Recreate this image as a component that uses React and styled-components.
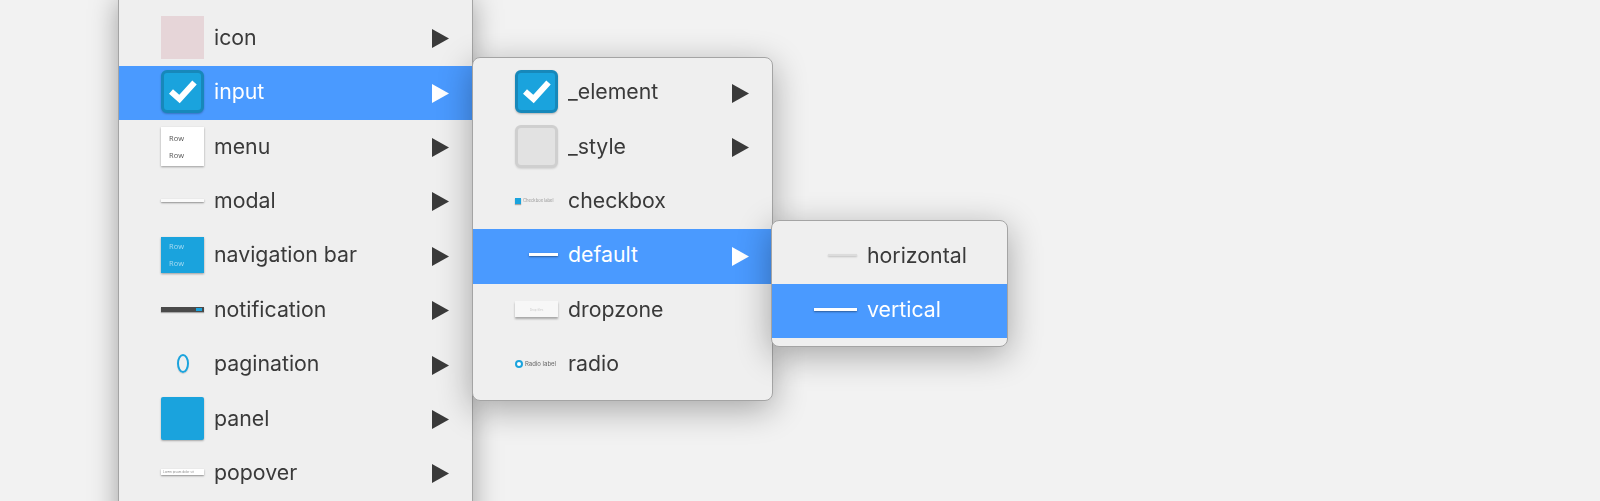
import React from "react";
import styled, { createGlobalStyle } from "styled-components";

const Global = createGlobalStyle`
  html, body { margin: 0; padding: 0; background: #f2f2f2; }
  #root { width: 1600px; height: 501px; overflow: hidden; }
`;

const Page = styled.div`
  width: 1600px;
  height: 501px;
  overflow: hidden;
  padding-left: 118px;
  box-sizing: border-box;
  font-family: Inter, "Liberation Sans", sans-serif;
  filter: blur(0.4px);
`;

const Menu = styled.div`
  box-sizing: border-box;
  width: 355px;
  height: 560px;
  padding-top: 11.6px;
  background: #efefef;
  border-left: 1.5px solid #a4a4a4;
  border-right: 1.5px solid #a4a4a4;
  box-shadow: 0 0 26px rgba(0, 0, 0, 0.34);
  display: flex;
  flex-direction: column;
`;

const Flyout = styled.div`
  position: absolute;
  left: calc(100% - ${(p) => p.$overlap || 0}px);
  top: -8.9px;
  z-index: 2;
  box-sizing: border-box;
  width: ${(p) => p.$width}px;
  padding: 8px 0;
  background: #efefef;
  border: 1px solid #a4a4a4;
  border-radius: 8px;
  box-shadow: 0 8px 34px rgba(0, 0, 0, 0.32);
  display: flex;
  flex-direction: column;
`;

const Row = styled.div`
  position: relative;
  flex: none;
  height: 54.4px;
  box-sizing: border-box;
  padding: 0 23px 0 42px;
  display: flex;
  align-items: center;
  gap: 10px;
  color: ${(p) => (p.$active ? "#fff" : "#3a3a3a")};
  background: ${(p) => (p.$active ? "#4a9aff" : "transparent")};
`;

const Label = styled.span`
  flex: 1;
  font-size: 21.3px;
  font-weight: 400;
  line-height: 28px;
  margin-bottom: 4px;
  white-space: nowrap;
`;

const ArrowIcon = styled.svg`
  flex: none;
  width: 17px;
  height: 19px;
  fill: currentColor;
`;

const Arrow = () => (
  <ArrowIcon viewBox="0 0 17 19">
    <path d="M0 0L17 9.5L0 19Z" />
  </ArrowIcon>
);

const Thumb = styled.div`
  flex: none;
  width: 43px;
  height: 43px;
  margin-bottom: 3px;
  display: flex;
  align-items: center;
  justify-content: center;
  box-sizing: border-box;
`;

const Swatch = styled.div`
  width: 43px;
  height: 43px;
  background: #e6d5d8;
`;

const CheckBox = styled.div`
  width: 43px;
  height: 43px;
  box-sizing: border-box;
  border: 3.5px solid #1788ba;
  border-radius: 6px;
  background: #1aa3dd;
  box-shadow: 0 1px 2px rgba(0, 0, 0, 0.25);
  display: flex;
  align-items: center;
  justify-content: center;
`;

const CheckIcon = styled.svg`
  width: 28px;
  height: 24px;
`;

const Check = () => (
  <CheckIcon viewBox="0 0 28 24">
    <path d="M2 11.5L10.5 19L25.5 2.5" fill="none" stroke="#fff" strokeWidth="6" />
  </CheckIcon>
);

const EmptyBox = styled.div`
  width: 43px;
  height: 43px;
  box-sizing: border-box;
  border: 3.5px solid #cfcfcf;
  border-radius: 6px;
  background: #e2e2e2;
  box-shadow: 0 1px 2px rgba(0, 0, 0, 0.12);
`;

const RowsCard = styled.div`
  width: 43px;
  height: ${(p) => (p.$blue ? 36 : 39)}px;
  box-sizing: border-box;
  padding: ${(p) => (p.$blue ? "3px" : "5px")} 8px;
  display: flex;
  flex-direction: column;
  gap: 5px;
  background: ${(p) => (p.$blue ? "#1aa3dd" : "#fff")};
  color: ${(p) => (p.$blue ? "#a9dcf2" : "#555")};
  box-shadow: 0 1px 2px rgba(0, 0, 0, 0.35);
  font-family: "Open Sans", sans-serif;
  font-size: 7.5px;
  line-height: 12px;
`;

const Line = styled.div`
  width: ${(p) => p.$w}px;
  height: ${(p) => p.$h}px;
  margin-left: ${(p) => 43 - p.$w}px;
  background: ${(p) => p.$bg};
  box-shadow: 0 1px 2px rgba(0, 0, 0, ${(p) => p.$shade});
`;

const NoticeBar = styled.div`
  width: 43px;
  height: 5px;
  background: #4a4a4a;
  display: flex;
  justify-content: flex-end;
  padding: 1px 2px;
  box-sizing: border-box;
  box-shadow: 0 1px 1px rgba(0, 0, 0, 0.3);
`;

const NoticeButton = styled.div`
  width: 6px;
  background: #1aa3dd;
`;

const Ring = styled.div`
  width: 12px;
  height: 19px;
  box-sizing: border-box;
  border: 2.5px solid #1aa3dd;
  border-radius: 50%;
  box-shadow: 0 1px 1px rgba(0, 0, 0, 0.15);
`;

const Panel = styled.div`
  width: 43px;
  height: 43px;
  border-radius: 2px;
  background: #1aa3dd;
  box-shadow: 0 1px 2px rgba(0, 0, 0, 0.3);
`;

const Popover = styled.div`
  width: 43px;
  height: 6px;
  background: #fff;
  box-shadow: 0 1px 2px rgba(0, 0, 0, 0.4);
  color: #888;
  font-size: 3px;
  line-height: 6px;
  padding-left: 2px;
  box-sizing: border-box;
  white-space: nowrap;
`;

const Inline = styled.div`
  width: 43px;
  display: flex;
  align-items: center;
  gap: 2px;
  color: ${(p) => p.$color};
  font-size: ${(p) => p.$size}px;
  white-space: nowrap;
`;

const TinyCheck = styled.div`
  flex: none;
  width: 6px;
  height: 6px;
  background: #1aa3dd;
  box-shadow: 0 1px 1px rgba(0, 0, 0, 0.3);
`;

const TinyRadio = styled.div`
  flex: none;
  width: 8px;
  height: 8px;
  box-sizing: border-box;
  border: 2.5px solid #1aa3dd;
  border-radius: 50%;
  background: #fff;
`;

const Dropzone = styled.div`
  width: 43px;
  height: 16px;
  box-sizing: border-box;
  padding-top: 7px;
  background: #f7f7f7;
  box-shadow: 0 1.5px 2px rgba(0, 0, 0, 0.3);
  color: #ccc;
  font-size: 3px;
  line-height: 5px;
  text-align: center;
  white-space: nowrap;
`;

const Item = ({ thumb, label, arrow, active, children }) => (
  <Row $active={active}>
    <Thumb>{thumb}</Thumb>
    <Label>{label}</Label>
    {arrow && <Arrow />}
    {children}
  </Row>
);

const Checked = () => (
  <CheckBox>
    <Check />
  </CheckBox>
);

export default function App() {
  return (
    <Page>
      <Global />
      <Menu>
        <Item thumb={<Swatch />} label="icon" arrow />
        <Item thumb={<Checked />} label="input" arrow active>
          <Flyout $width={301}>
            <Item thumb={<Checked />} label="_element" arrow />
            <Item thumb={<EmptyBox />} label="_style" arrow />
            <Item
              thumb={
                <Inline $color="#999" $size={4.2}>
                  <TinyCheck />
                  Checkbox label
                </Inline>
              }
              label="checkbox"
            />
            <Item thumb={<Line $w={29} $h={3} $bg="#fff" $shade={0.4} />} label="default" arrow active>
              <Flyout $width={237} $overlap={1}>
                <Item thumb={<Line $w={29} $h={2} $bg="#dcdcdc" $shade={0.2} />} label="horizontal" />
                <Item thumb={<Line $w={43} $h={3} $bg="#fff" $shade={0.4} />} label="vertical" active />
              </Flyout>
            </Item>
            <Item thumb={<Dropzone>Drop files</Dropzone>} label="dropzone" />
            <Item
              thumb={
                <Inline $color="#666" $size={6}>
                  <TinyRadio />
                  Radio label
                </Inline>
              }
              label="radio"
            />
          </Flyout>
        </Item>
        <Item
          thumb={
            <RowsCard>
              <span>Row</span>
              <span>Row</span>
            </RowsCard>
          }
          label="menu"
          arrow
        />
        <Item thumb={<Line $w={43} $h={3} $bg="#fafafa" $shade={0.4} />} label="modal" arrow />
        <Item
          thumb={
            <RowsCard $blue>
              <span>Row</span>
              <span>Row</span>
            </RowsCard>
          }
          label="navigation bar"
          arrow
        />
        <Item
          thumb={
            <NoticeBar>
              <NoticeButton />
            </NoticeBar>
          }
          label="notification"
          arrow
        />
        <Item thumb={<Ring />} label="pagination" arrow />
        <Item thumb={<Panel />} label="panel" arrow />
        <Item thumb={<Popover>Lorem ipsum dolor sit</Popover>} label="popover" arrow />
      </Menu>
    </Page>
  );
}
